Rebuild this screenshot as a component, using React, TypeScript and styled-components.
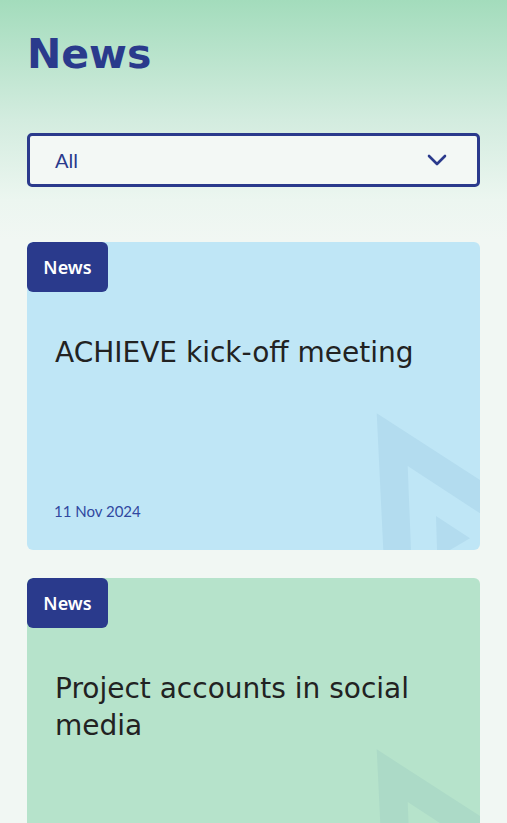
import React from "react";
import styled, { createGlobalStyle } from "styled-components";

const Global = createGlobalStyle`
  html, body { margin: 0; padding: 0; }
  body {
    background: #f1f7f3;
    font-family: "DejaVu Sans", "Noto Sans", sans-serif;
  }
`;

const Page = styled.div`
  min-height: 823px;
  background: linear-gradient(180deg, #a3dcbc 0px, #d3ecdf 120px, #ecf6f0 200px, #f1f7f3 240px, #f1f7f3 100%);
  padding: 24px 27px 40px;
  box-sizing: border-box;
`;

const Heading = styled.h1`
  margin: 0;
  font-family: "DejaVu Sans", sans-serif;
  font-weight: 700;
  font-size: 41px;
  line-height: 60px;
  color: #2a3a8c;
`;

const Select = styled.div`
  margin-top: 49px;
  height: 54px;
  box-sizing: border-box;
  border: 3px solid #2a3a8c;
  border-radius: 5px;
  background: #f3f8f5;
  display: flex;
  align-items: center;
  justify-content: space-between;
  padding: 0 30px 0 25px;
`;

const SelectValue = styled.span`
  font-family: "Lato", sans-serif;
  font-size: 20px;
  color: #2a3a8c;
`;

const List = styled.div`
  margin-top: 55px;
  display: flex;
  flex-direction: column;
  gap: 28px;
`;

const Card = styled.article<{ $bg: string }>`
  position: relative;
  overflow: hidden;
  min-height: 308px;
  box-sizing: border-box;
  background: ${(p) => p.$bg};
  border-radius: 6px;
  display: flex;
  flex-direction: column;
  padding: 0 28px 30px 27px;
`;

const Badge = styled.span`
  align-self: flex-start;
  margin-left: -27px;
  width: 81px;
  height: 50px;
  box-sizing: border-box;
  display: flex;
  align-items: center;
  justify-content: center;
  background: #2a3a8c;
  color: #ffffff;
  border-radius: 6px;
  font-family: "Noto Sans", sans-serif;
  font-weight: 600;
  font-size: 18px;
  position: relative;
  z-index: 1;
`;

const Title = styled.h2`
  margin: 42px 0 0 1px;
  font-family: "DejaVu Sans", sans-serif;
  font-weight: 400;
  font-size: 28px;
  line-height: 37px;
  color: #222222;
  position: relative;
  z-index: 1;
`;

const DateText = styled.time`
  margin-top: auto;
  font-family: "Lato", sans-serif;
  font-size: 15px;
  color: #3048a0;
  position: relative;
  z-index: 1;
`;

const Deco = styled.svg`
  position: absolute;
  right: 0;
  top: 160px;
  width: 113px;
  height: 148px;
`;

const Chevron = () => (
  <svg width="20" height="14" viewBox="0 0 20 14">
    <path d="M2 3 L10 11 L18 3" fill="none" stroke="#2a3a8c" strokeWidth="2.6" strokeLinecap="round" strokeLinejoin="round" />
  </svg>
);

const Logo = ({ color }: { color: string }) => (
  <Deco viewBox="0 0 113 148">
    <polygon points="9.7,11.3 16.3,148 44,148 40.7,64 113,111.3 113,78" fill={color} />
    <polygon points="69,114 103,136.3 83,148 70,148" fill={color} />
  </Deco>
);

const items = [
  { title: "ACHIEVE kick-off meeting", date: "11 Nov 2024", bg: "#bfe6f6", deco: "#b3dcef" },
  { title: "Project accounts in social media", date: "", bg: "#b6e3cb", deco: "#acdac7" },
];

export default function App() {
  return (
    <>
      <Global />
      <Page>
        <Heading>News</Heading>
        <Select>
          <SelectValue>All</SelectValue>
          <Chevron />
        </Select>
        <List>
          {items.map((it) => (
            <Card key={it.title} $bg={it.bg}>
              <Logo color={it.deco} />
              <Badge>News</Badge>
              <Title>{it.title}</Title>
              {it.date && <DateText>{it.date}</DateText>}
            </Card>
          ))}
        </List>
      </Page>
    </>
  );
}
